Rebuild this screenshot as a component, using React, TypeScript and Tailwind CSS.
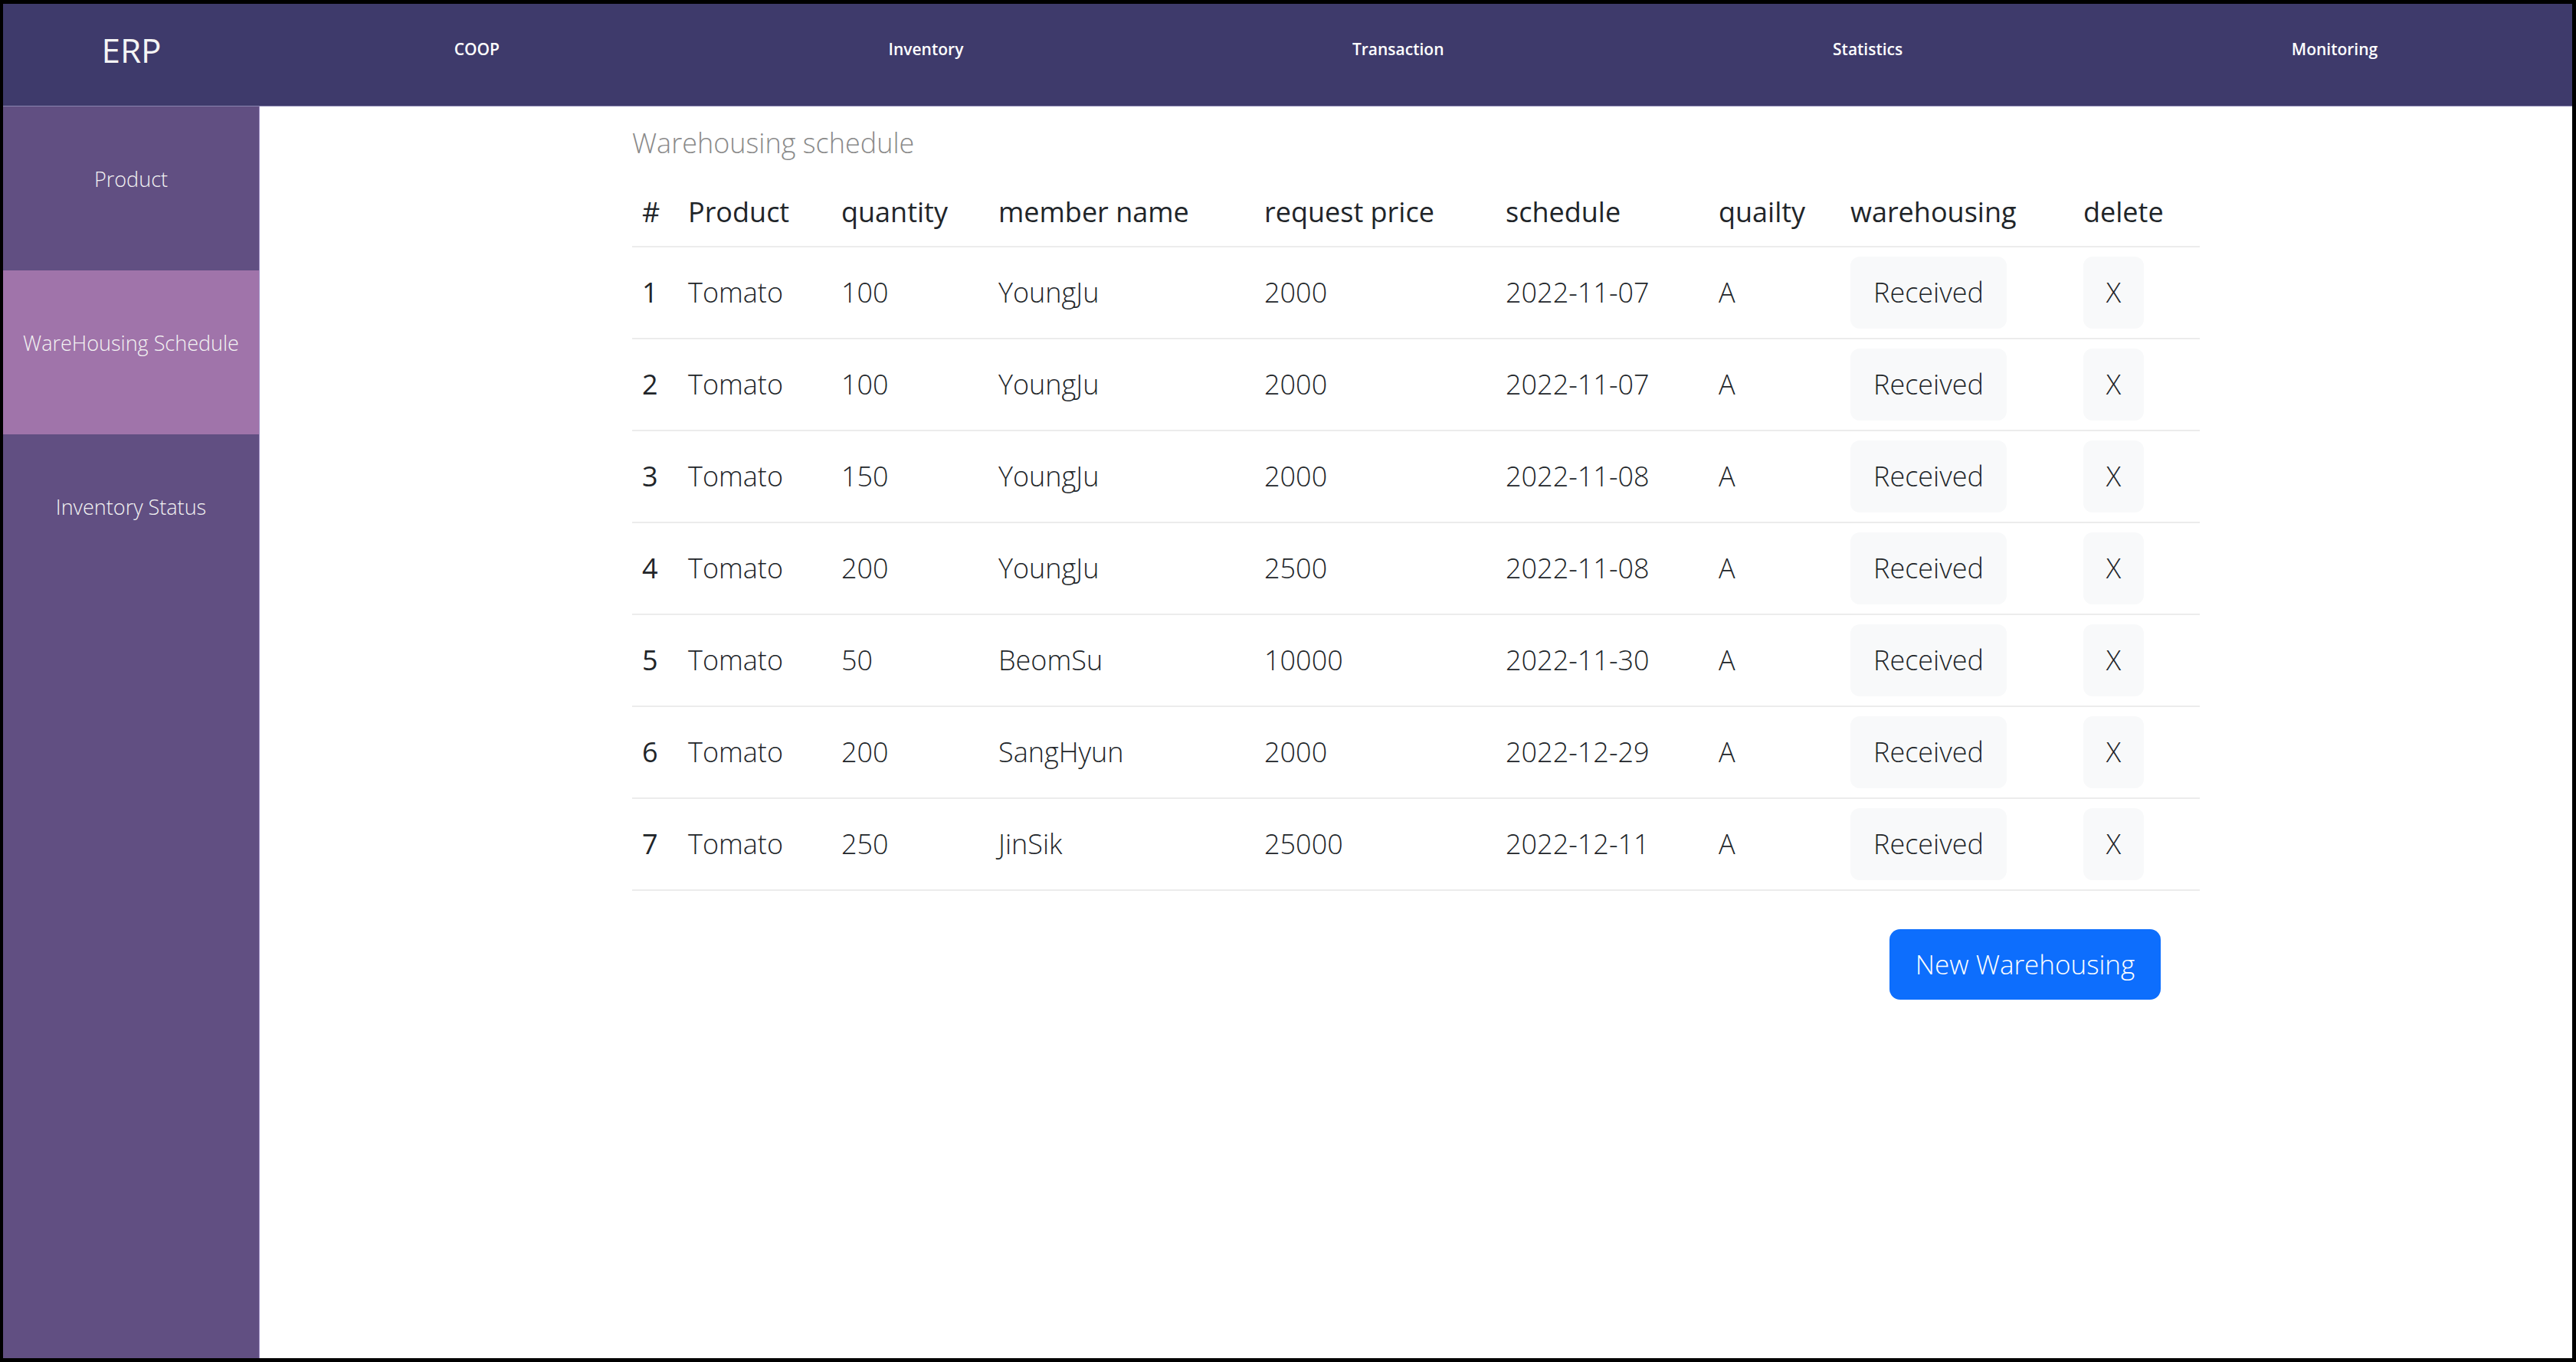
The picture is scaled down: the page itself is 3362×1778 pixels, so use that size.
import React from 'react';

const navItems = ['COOP', 'Inventory', 'Transaction', 'Statistics', 'Monitoring'];
const sideItems = ['Product', 'WareHousing Schedule', 'Inventory Status'];

const columns = [
  { label: '#', width: 'w-[60px]' },
  { label: 'Product', width: 'w-[200px]' },
  { label: 'quantity', width: 'w-[205px]' },
  { label: 'member name', width: 'w-[347px]' },
  { label: 'request price', width: 'w-[315px]' },
  { label: 'schedule', width: 'w-[278px]' },
  { label: 'quailty', width: 'w-[172px]' },
  { label: 'warehousing', width: 'w-[304px]' },
  { label: 'delete', width: 'w-[165px]' },
];

const rows = [
  { id: 1, qty: 100, member: 'YoungJu', price: 2000, date: '2022-11-07' },
  { id: 2, qty: 100, member: 'YoungJu', price: 2000, date: '2022-11-07' },
  { id: 3, qty: 150, member: 'YoungJu', price: 2000, date: '2022-11-08' },
  { id: 4, qty: 200, member: 'YoungJu', price: 2500, date: '2022-11-08' },
  { id: 5, qty: 50, member: 'BeomSu', price: 10000, date: '2022-11-30' },
  { id: 6, qty: 200, member: 'SangHyun', price: 2000, date: '2022-12-29' },
  { id: 7, qty: 250, member: 'JinSik', price: 25000, date: '2022-12-11' },
];

const Header = () => (
  <header className="flex h-[134px] shrink-0 items-center border-b border-[#8a85b0] bg-[#3e3a6b] pb-[14px]">
    <div className="flex w-[335px] justify-center text-[44px] text-[#f5f5f5]">ERP</div>
    <nav className="flex flex-1 items-center justify-around">
      {navItems.map((item) => (
        <span key={item} className="text-[21px] font-semibold text-white">
          {item}
        </span>
      ))}
    </nav>
  </header>
);

const Sidebar = () => (
  <aside className="w-[335px] shrink-0 border-r border-[#a898cc] bg-[#614f82]">
    {sideItems.map((item, i) => (
      <div
        key={item}
        className={`h-[214px] pt-[75px] text-center text-[27px] font-light leading-[40px] text-[#f3f3f3] ${
          i === 1 ? 'bg-[#a074aa]' : ''
        }`}
      >
        {item}
      </div>
    ))}
  </aside>
);

export default function App() {
  return (
    <div className="h-[1778px] w-[3362px] bg-black pb-[5px] pl-[4px] pr-[5px] pt-[5px] font-['Open_Sans',sans-serif]">
      <div className="flex h-full flex-col">
        <Header />
        <div className="flex flex-1">
          <Sidebar />
          <main className="flex-1 bg-white">
            <div className="mx-auto w-[2046px]">
              <h2 className="mt-[21px] mb-[18px] text-[36px] font-light leading-[54px] text-[#8a8a8a]">
                Warehousing schedule
              </h2>
              <table className="w-full table-fixed border-collapse text-left text-[36px] text-[#212529]">
                <colgroup>
                  {columns.map((c) => (
                    <col key={c.label} className={c.width} />
                  ))}
                </colgroup>
                <thead>
                  <tr className="border-b-2 border-[#ececec]">
                    {columns.map((c) => (
                      <th key={c.label} className="h-[90px] px-[13px] font-normal">
                        {c.label}
                      </th>
                    ))}
                  </tr>
                </thead>
                <tbody className="font-light">
                  {rows.map((r) => (
                    <tr key={r.id} className="border-b-2 border-[#ececec]">
                      <td className="h-[120px] px-[13px] font-normal">{r.id}</td>
                      <td className="px-[13px]">Tomato</td>
                      <td className="px-[13px]">{r.qty}</td>
                      <td className="px-[13px]">{r.member}</td>
                      <td className="px-[13px]">{r.price}</td>
                      <td className="px-[13px]">{r.date}</td>
                      <td className="px-[13px]">A</td>
                      <td className="px-[13px]">
                        <button className="flex h-[94px] w-[204px] items-center justify-center rounded-[12px] bg-[#f8f9fa]">
                          Received
                        </button>
                      </td>
                      <td className="px-[13px]">
                        <button className="flex h-[94px] w-[79px] items-center justify-center rounded-[12px] bg-[#f8f9fa]">
                          X
                        </button>
                      </td>
                    </tr>
                  ))}
                </tbody>
              </table>
              <div className="mt-[50px] flex justify-end pr-[51px]">
                <button className="h-[92px] w-[354px] rounded-[14px] bg-[#0d6efd] text-[35px] font-light text-white">
                  New Warehousing
                </button>
              </div>
            </div>
          </main>
        </div>
      </div>
    </div>
  );
}
